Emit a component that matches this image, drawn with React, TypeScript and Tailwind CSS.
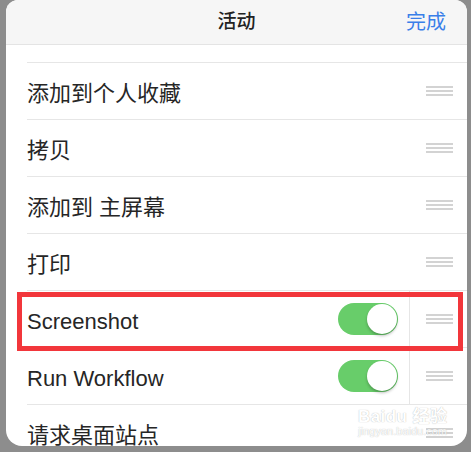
import React from "react";

const font = { fontFamily: '"Liberation Sans", "Noto Sans CJK SC", sans-serif' };

function Handle() {
  return (
    <div className="flex w-[27px] flex-col gap-[2px]">
      <div className="h-[2px] bg-[#d3d3d3]" />
      <div className="h-[2px] bg-[#d3d3d3]" />
      <div className="h-[2px] bg-[#d3d3d3]" />
    </div>
  );
}

function Toggle() {
  return (
    <div className="flex h-[32px] w-[60px] items-center justify-end rounded-full bg-[#68cd6a] p-[1px]">
      <div className="h-[30px] w-[30px] rounded-full bg-white shadow-[0_2px_3px_rgba(0,0,0,0.25)]" />
    </div>
  );
}

type Row = { label: string; toggle?: boolean };

const rows: Row[] = [
  { label: "添加到个人收藏" },
  { label: "拷贝" },
  { label: "添加到 主屏幕" },
  { label: "打印" },
  { label: "Screenshot", toggle: true },
  { label: "Run Workflow", toggle: true },
  { label: "请求桌面站点" },
];

export default function App() {
  return (
    <div className="h-[452px] w-[471px] overflow-hidden bg-[#8d8d8d] pl-[6px] pr-[4px]" style={font}>
      <div className="relative h-[446px] overflow-hidden rounded-b-[16px] rounded-t-[12px] bg-white">
        <div className="relative flex h-[45px] items-center justify-center border-b border-[#e4e4e4] bg-[#f6f6f6]">
          <span className="text-[19px] font-medium text-[#222]">活动</span>
          <span className="absolute right-[21px] text-[20px] text-[#3a7fe9]">完成</span>
        </div>
        <div className="h-[17px]" />
        {rows.map((r) => (
          <div key={r.label} className="ml-[21px] flex h-[57px] items-center border-t border-[#e6e6e6]">
            <span className="flex-1 pt-[4px] text-[22px] text-[#262626]">{r.label}</span>
            {r.toggle ? (
              <div className="flex h-full items-center">
                <Toggle />
                <div className="ml-[11px] flex h-full items-center border-l border-[#e6e6e6] pl-[16px] pr-[14px]">
                  <Handle />
                </div>
              </div>
            ) : (
              <div className="pr-[14px]">
                <Handle />
              </div>
            )}
          </div>
        ))}
        <div className="pointer-events-none absolute left-[11px] top-[292px] h-[59px] w-[446px] border-[5px] border-[#f2363b]" />
        <div className="pointer-events-none absolute left-[352px] top-[408px] flex flex-col items-center text-[#ffffff] opacity-80">
          <span className="text-[17px] font-bold leading-none tracking-wide [text-shadow:0_0_1px_#999]">Baidu 经验</span>
          <span className="text-[11px] leading-tight [text-shadow:0_0_1px_#999]">jingyan.baidu.com</span>
        </div>
      </div>
    </div>
  );
}
